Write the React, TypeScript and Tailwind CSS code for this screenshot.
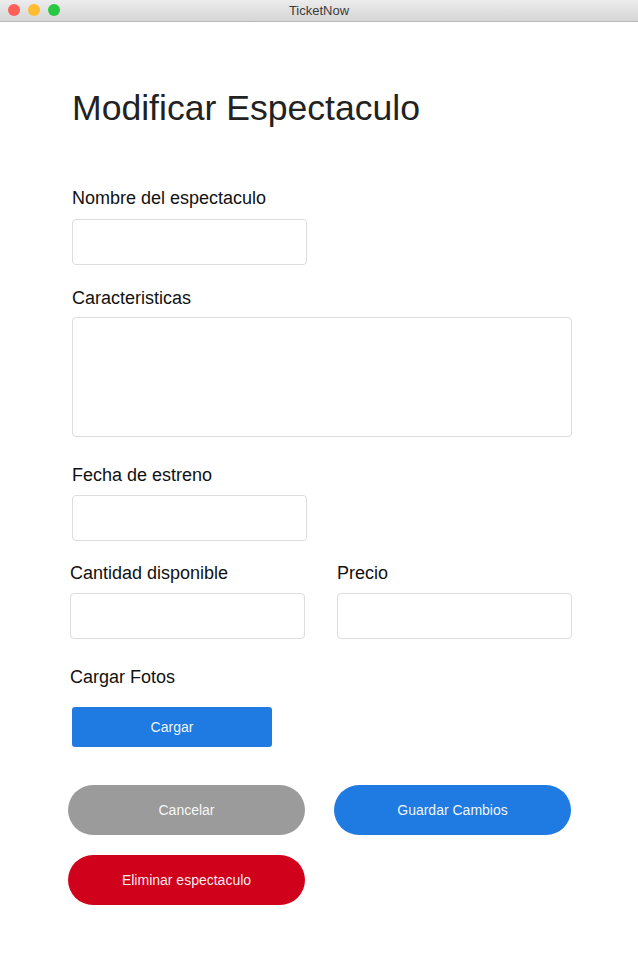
const field = 'block rounded-[4px] border border-[#dcdcdc] bg-white';
const label = 'block text-[18px] leading-[22px] text-[#111]';
const pill = 'flex h-[50px] w-[237px] items-center justify-center rounded-full text-[14px] text-white/95';

function TitleBar() {
  return (
    <header className="relative flex h-[22px] items-center justify-center border-b border-[#b9b9b9] bg-gradient-to-b from-[#ececec] to-[#d6d6d6]">
      <div className="absolute left-[8px] top-[4px] flex gap-[8px]">
        <span className="h-[12px] w-[12px] rounded-full bg-[#fe5f57]" />
        <span className="h-[12px] w-[12px] rounded-full bg-[#febc2e]" />
        <span className="h-[12px] w-[12px] rounded-full bg-[#28c840]" />
      </div>
      <span className="text-[13px] leading-none text-[#3c3c3c]">TicketNow</span>
    </header>
  );
}

export default function App() {
  return (
    <div className="min-h-[962px] bg-white" style={{ fontFamily: '"Liberation Sans", Arial, sans-serif' }}>
      <TitleBar />
      <main className="flex flex-col">
        <h1 className="ml-[72px] mt-[66px] text-[35.6px] leading-[40px] text-[#222]">Modificar Espectaculo</h1>

        <label className={`${label} ml-[72px] mt-[59px]`}>Nombre del espectaculo</label>
        <input className={`${field} ml-[72px] mt-[10px] h-[46px] w-[235px]`} />

        <label className={`${label} ml-[72px] mt-[22px]`}>Caracteristicas</label>
        <textarea className={`${field} ml-[72px] mt-[8px] h-[120px] w-[500px] resize-none`} />

        <label className={`${label} ml-[72px] mt-[27px]`}>Fecha de estreno</label>
        <input className={`${field} ml-[72px] mt-[9px] h-[46px] w-[235px]`} />

        <div className="ml-[70px] mt-[21px] grid w-[502px] grid-cols-[235px_235px] gap-x-[32px]">
          <div className="flex flex-col">
            <label className={label}>Cantidad disponible</label>
            <input className={`${field} mt-[9px] h-[46px] w-[235px]`} />
          </div>
          <div className="flex flex-col">
            <label className={label}>Precio</label>
            <input className={`${field} mt-[9px] h-[46px] w-[235px]`} />
          </div>
        </div>

        <label className={`${label} ml-[70px] mt-[27px]`}>Cargar Fotos</label>
        <button className="ml-[72px] mt-[19px] flex h-[40px] w-[200px] items-center justify-center rounded-[3px] bg-[#1f7be2] text-[14px] text-white/95">
          Cargar
        </button>

        <div className="ml-[68px] mt-[38px] flex gap-[29px]">
          <button className={`${pill} bg-[#9b9b9b]`}>Cancelar</button>
          <button className={`${pill} bg-[#1f7be2]`}>Guardar Cambios</button>
        </div>
        <div className="ml-[68px] mt-[20px] flex">
          <button className={`${pill} bg-[#d0021b]`}>Eliminar espectaculo</button>
        </div>
      </main>
    </div>
  );
}
